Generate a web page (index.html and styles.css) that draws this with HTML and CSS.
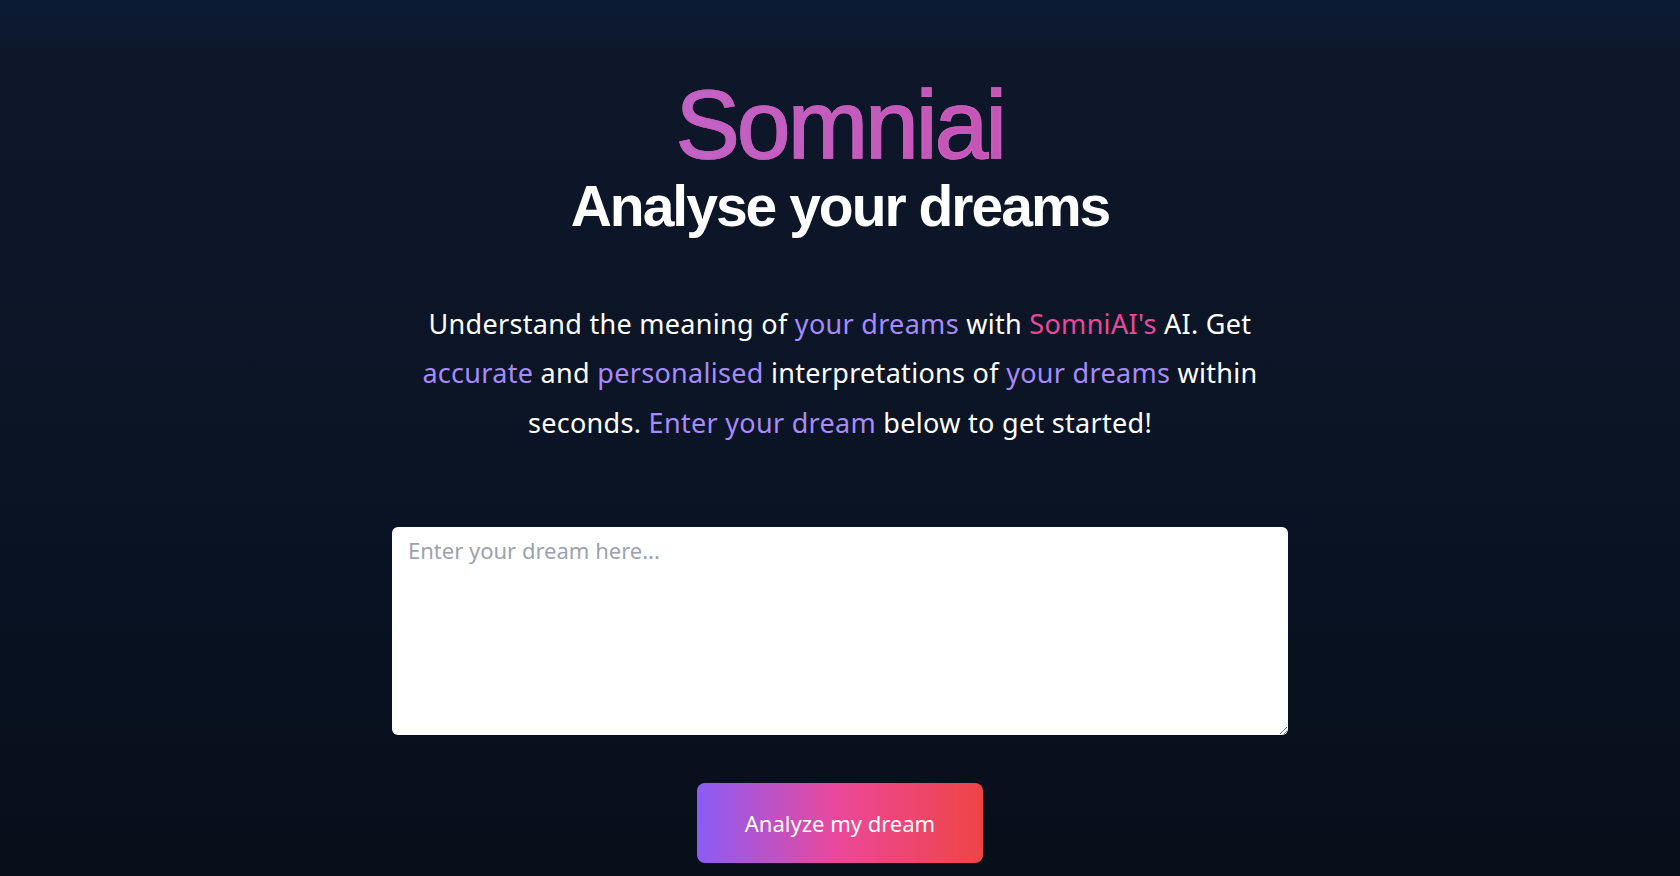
FILE: index.html
```html
<!DOCTYPE html>
<html>
<head>
  <meta charset="UTF-8">
  <title>Somniai</title>
  <link rel="stylesheet" href="styles.css">
</head>
<body>
  <main class="page">
    <header class="hero">
      <h1 class="brand">Somniai</h1>
      <h2 class="tagline">Analyse your dreams</h2>
    </header>
    <p class="intro">
      <span class="line">Understand the meaning of <span class="hl">your dreams</span> with <span class="hl-pink">SomniAI's</span> AI. Get</span>
      <span class="line"><span class="hl">accurate</span> and <span class="hl">personalised</span> interpretations of <span class="hl">your dreams</span> within</span>
      <span class="line">seconds. <span class="hl">Enter your dream</span> below to get started!</span>
    </p>
    <form class="dream-form">
      <textarea class="dream-input" placeholder="Enter your dream here..."></textarea>
      <button type="button" class="analyze-button">Analyze my dream</button>
    </form>
  </main>
</body>
</html>
```

FILE: styles.css
```css
html, body {
  margin: 0;
  height: 100%;
}
body {
  background: linear-gradient(to bottom, #0c1b35 0%, #0d1729 7%, #0b1526 45%, #081120 75%, #070f1a 100%);
  color: #fff;
  font-family: "Noto Sans", "Liberation Sans", sans-serif;
  overflow: hidden;
}
.page {
  display: flex;
  flex-direction: column;
  align-items: center;
  padding-top: 75px;
}
.hero {
  text-align: center;
}
.brand {
  margin: 0;
  font-family: "Liberation Sans", Arial, sans-serif;
  font-weight: 400;
  font-size: 96px;
  line-height: 99px;
  letter-spacing: -2.6px;
  background: linear-gradient(to right, #bf69cc, #c94ead);
  -webkit-background-clip: text;
  background-clip: text;
  color: transparent;
  -webkit-text-stroke: 1.6px #c45dbd;
}
.tagline {
  margin: 4px 0 0 0;
  font-family: "Liberation Sans", Arial, sans-serif;
  font-weight: 700;
  font-size: 57px;
  line-height: 57px;
  letter-spacing: -2px;
  color: #fff;
}
.intro {
  max-width: 896px;
  margin: 64px 0 0 0;
  font-size: 27px;
  line-height: 49.3px;
  letter-spacing: 0.3px;
  text-align: center;
}
.intro .line {
  display: block;
}
.hl {
  color: #a78bfa;
}
.hl-pink {
  color: #ec4899;
}
.dream-form {
  display: flex;
  flex-direction: column;
  align-items: center;
  margin-top: 80px;
}
.dream-input {
  box-sizing: border-box;
  width: 896px;
  height: 208px;
  padding: 8px 16px;
  border: none;
  border-radius: 6px;
  background: #fff;
  font-family: "Noto Sans", "Liberation Sans", sans-serif;
  font-size: 22px;
  line-height: 30px;
  color: #111827;
}
.dream-input::placeholder {
  color: #9ca3af;
}
.analyze-button {
  margin-top: 48px;
  padding: 24px 48px;
  border: none;
  border-radius: 8px;
  background: linear-gradient(to right, #8b5cf6, #ec4899 50%, #ef4444);
  color: #fff;
  font-family: "Noto Sans", "Liberation Sans", sans-serif;
  font-size: 22px;
  line-height: 32px;
  cursor: pointer;
}
```
